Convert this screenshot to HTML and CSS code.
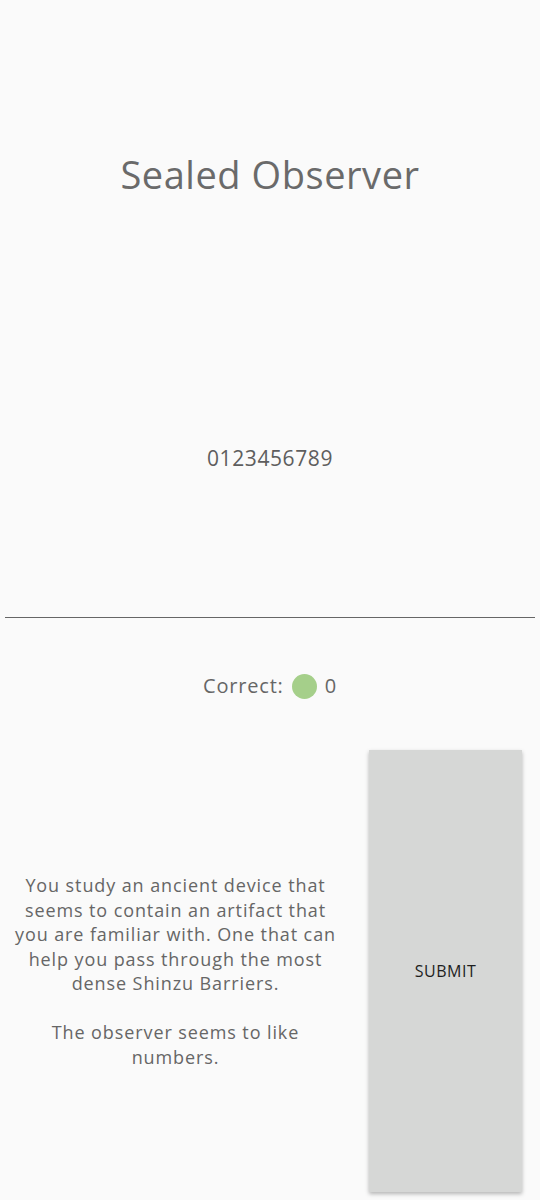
FILE: index.html
```html
<!DOCTYPE html>
<html>
<head>
<meta charset="utf-8">
<link rel="stylesheet" href="styles.css">
</head>
<body>
<div class="page">
  <h1 class="title">Sealed Observer</h1>
  <div class="number">0123456789</div>
  <hr class="divider">
  <div class="correct"><span>Correct:</span><span class="dot"></span><span>0</span></div>
  <div class="row">
    <div class="story">
      <p>You study an ancient device that<br>seems to contain an artifact that<br>you are familiar with. One that can<br>help you pass through the most<br>dense Shinzu Barriers.</p>
      <p>The observer seems to like<br>numbers.</p>
    </div>
    <div class="submit">SUBMIT</div>
  </div>
</div>
</body>
</html>
```
FILE: styles.css
```css
html, body {
  margin: 0;
  padding: 0;
  background: #fafafa;
}
.page {
  font-family: "Open Sans", sans-serif;
  color: #666666;
  width: 540px;
  height: 1200px;
  overflow: hidden;
}
.title {
  margin: 0;
  padding-top: 150px;
  font-size: 38px;
  line-height: 48px;
  font-weight: 400;
  letter-spacing: 0.55px;
  text-align: center;
  color: #6a6a6a;
}
.number {
  margin-top: 246px;
  font-size: 21px;
  line-height: 28px;
  letter-spacing: 0.6px;
  text-align: center;
  color: #5e5e5e;
}
.divider {
  margin: 145px 5px 0;
  border: 0;
  border-top: 1px solid #666666;
  height: 0;
}
.correct {
  margin-top: 54px;
  font-size: 20px;
  line-height: 28px;
  letter-spacing: 0.8px;
  text-align: center;
  display: flex;
  justify-content: center;
  align-items: center;
  gap: 8px;
}
.dot {
  display: inline-block;
  width: 25px;
  height: 25px;
  border-radius: 50%;
  background: #a5cf8a;
}
.row {
  margin-top: 50px;
  display: flex;
  align-items: center;
}
.story {
  flex: 1;
  margin-right: 18px;
  text-align: center;
  font-size: 18px;
  line-height: 24.5px;
  letter-spacing: 0.9px;
  white-space: nowrap;
}
.story p {
  margin: 0;
}
.story p + p {
  margin-top: 24.5px;
}
.submit {
  width: 153px;
  height: 442px;
  margin-right: 18px;
  background: #d6d7d6;
  box-shadow: 0 2px 4px rgba(0,0,0,0.28);
  display: flex;
  align-items: center;
  justify-content: center;
  font-size: 16px;
  letter-spacing: 0.5px;
  color: #1e1e1e;
}
```
